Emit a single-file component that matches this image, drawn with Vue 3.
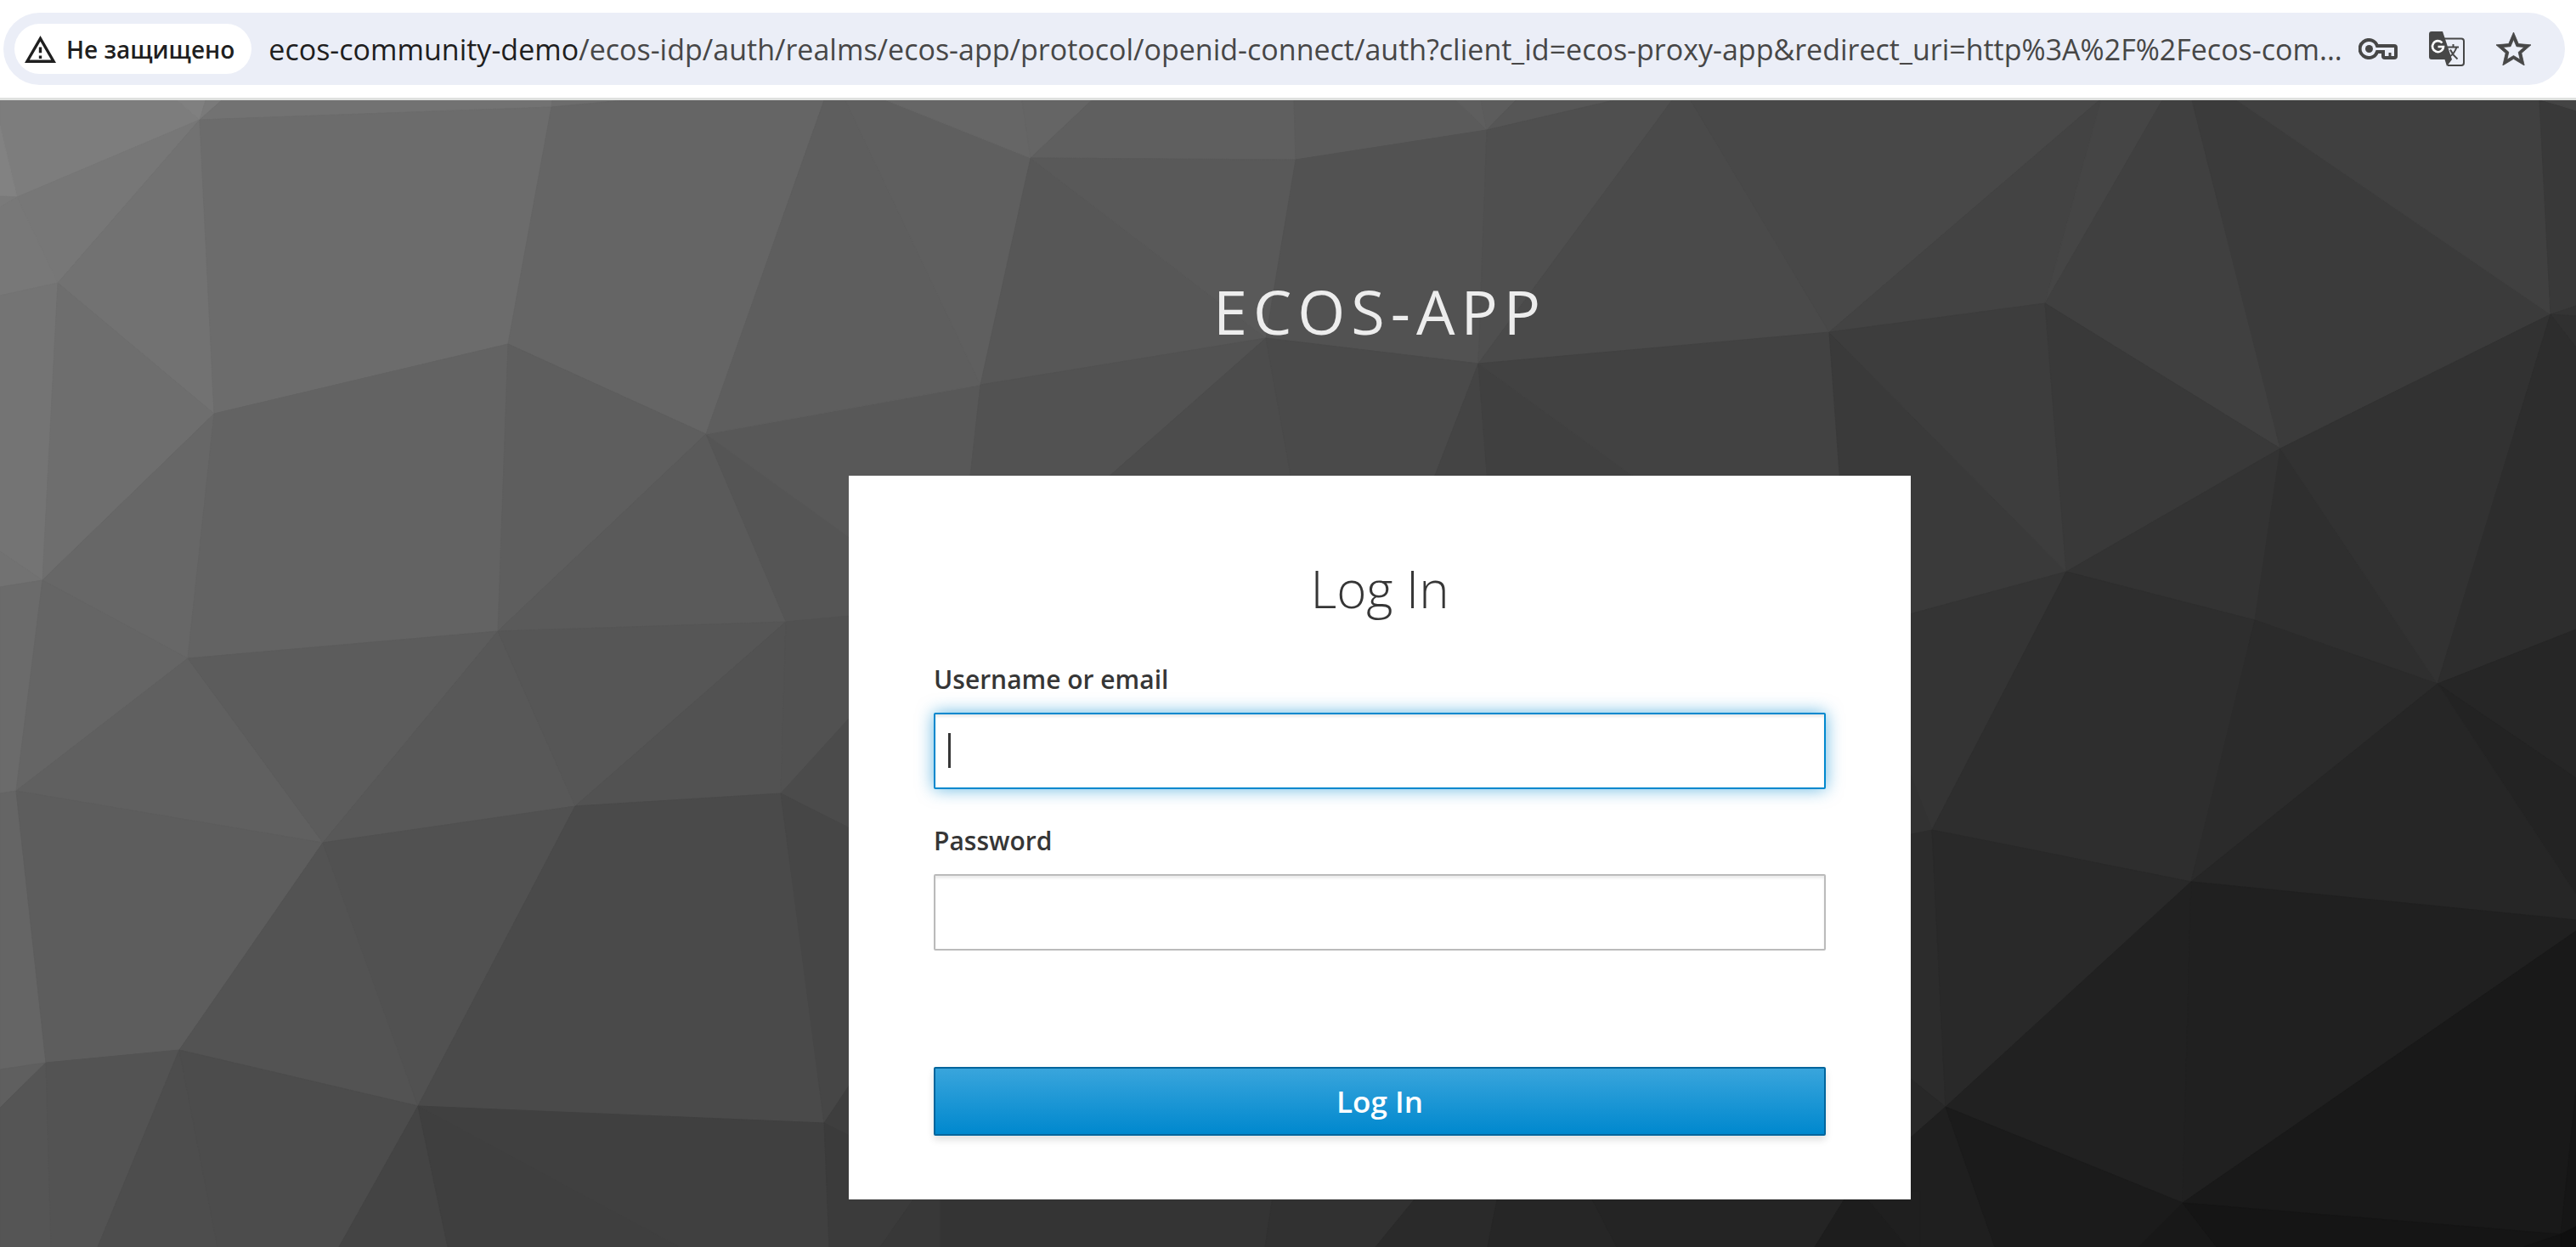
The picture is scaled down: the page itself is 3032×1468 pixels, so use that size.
<script setup>
import { ref } from 'vue'

const username = ref('')
const password = ref('')

// Facets of the low-poly backdrop: [shade, polygon points]
const facets = [
  ['#7d7d7d', '0,118 209,118 235,141 20,232 0,148'],
  ['#828282', '0,148 20,232 0,231'],
  ['#7a7a7a', '0,231 20,232 0,244'],
  ['#808080', '209,118 242,118 235,141'],
  ['#7a7a7a', '242,118 261,118 235,141'],
  ['#727272', '261,118 650,118 649,126 235,141'],
  ['#6c6c6c', '650,118 735,118 649,126'],
  ['#777777', '20,232 235,141 68,333'],
  ['#787878', '0,244 20,232 68,333 0,348'],
  ['#727272', '235,141 252,487 68,333'],
  ['#6c6c6c', '235,141 649,126 598,405 252,487'],
  ['#656565', '649,126 735,118 970,118 831,511 598,405'],
  ['#747474', '0,348 68,333 50,683 0,649'],
  ['#727272', '0,649 50,683 0,691'],
  ['#6e6e6e', '68,333 252,487 50,683'],
  ['#6b6b6b', '0,691 50,683 19,931 0,934'],
  ['#676767', '252,487 221,775 50,683'],
  ['#656565', '50,683 221,775 19,931'],
  ['#636363', '252,487 598,405 586,743 221,775'],
  ['#5e5e5e', '598,405 831,511 586,743'],
  ['#5a5a5a', '831,511 925,732 586,743'],
  ['#555555', '831,511 1010,640 1010,724 925,732'],
  ['#585858', '831,511 1154,453 1141,570 1010,640'],
  ['#5e5e5e', '970,118 995,118 1154,453 831,511'],
  ['#606060', '19,931 221,775 380,992'],
  ['#5c5c5c', '221,775 586,743 380,992'],
  ['#585858', '586,743 677,949 380,992'],
  ['#565656', '586,743 925,732 677,949'],
  ['#525252', '925,732 919,934 677,949'],
  ['#515151', '925,732 1010,724 1010,834 919,934'],
  ['#4b4b4b', '1010,834 1010,980 919,934'],
  ['#656565', '0,934 19,931 54,1251 0,1259'],
  ['#5d5d5d', '19,931 380,992 211,1236 54,1251'],
  ['#535353', '380,992 492,1302 211,1236'],
  ['#515151', '380,992 677,949 492,1302'],
  ['#4a4a4a', '677,949 919,934 970,1322 492,1302'],
  ['#464646', '919,934 1010,980 1010,1262 970,1322'],
  ['#5f5f5f', '0,1259 54,1251 0,1304'],
  ['#555555', '0,1304 54,1251 60,1468 0,1468'],
  ['#535353', '54,1251 211,1236 115,1468 60,1468'],
  ['#4d4d4d', '211,1236 256,1468 115,1468'],
  ['#4c4c4c', '211,1236 492,1302 399,1468 256,1468'],
  ['#444444', '492,1302 527,1468 399,1468'],
  ['#3f3f3f', '492,1302 800,1468 527,1468'],
  ['#404040', '492,1302 970,1322 976,1468 800,1468'],
  ['#3e3e3e', '970,1322 1010,1262 1010,1342'],
  ['#3b3b3b', '970,1322 1010,1342 1090,1342 1090,1391 1036,1468 976,1468'],

  ['#5f5f5f', '995,118 1043,118 1213,186 1154,453'],
  ['#666666', '1043,118 1203,118 1213,186'],
  ['#656565', '1203,118 1285,118 1213,186'],
  ['#5f5f5f', '1285,118 1523,118 1525,188 1213,186'],
  ['#5b5b5b', '1523,118 1714,118 1750,153 1525,188'],
  ['#5e5e5e', '1714,118 1743,118 1750,153'],
  ['#5c5c5c', '1743,118 1784,118 1750,153'],
  ['#565656', '1784,118 1900,118 1750,153'],
  ['#575757', '1213,186 1490,398 1154,453'],
  ['#595959', '1213,186 1525,188 1490,398'],
  ['#525252', '1525,188 1750,153 1740,428 1490,398'],
  ['#4f4f4f', '1750,153 1900,118 1968,118 1740,428'],
  ['#4a4a4a', '1968,118 1990,118 2153,391 1740,428'],
  ['#525252', '1154,453 1490,398 1295,570 1141,570'],
  ['#4c4c4c', '1490,398 1521,570 1295,570'],
  ['#4a4a4a', '1490,398 1740,428 1685,570 1521,570'],
  ['#444444', '1740,428 1751,570 1685,570'],
  ['#404040', '1740,428 1935,570 1751,570'],
  ['#424242', '1740,428 2153,391 2166,570 1935,570'],

  ['#484848', '1990,118 2471,118 2153,391'],
  ['#434343', '2471,118 2473,118 2407,357 2153,391'],
  ['#454545', '2473,118 2545,118 2407,357'],
  ['#404040', '2545,118 2580,118 2684,528 2407,357'],
  ['#3b3b3b', '2580,118 2633,118 3002,370 2684,528'],
  ['#404040', '2633,118 2989,118 3002,370'],
  ['#393939', '2989,118 3032,130 3032,360 3002,370'],
  ['#444444', '2994,118 3032,118 3032,130'],
  ['#343434', '3002,370 3032,360 3032,372'],
  ['#303030', '3002,370 3032,372 3032,409'],
  ['#3a3a3a', '2153,391 2432,673 2240,725 2166,570'],
  ['#3d3d3d', '2153,391 2407,357 2432,673'],
  ['#393939', '2407,357 2684,528 2432,673'],
  ['#333333', '2684,528 2654,730 2432,673'],
  ['#2f2f2f', '2684,528 2869,805 2654,730'],
  ['#323232', '2684,528 3002,370 2869,805'],
  ['#2d2d2d', '3002,370 3032,409 3032,741 2869,805'],
  ['#343434', '2240,725 2432,673 2274,977 2240,890'],
  ['#323232', '2240,890 2274,977 2240,984'],
  ['#2e2e2e', '2432,673 2654,730 2579,1038 2274,977'],
  ['#2b2b2b', '2654,730 2869,805 2579,1038'],
  ['#262626', '2869,805 3032,741 3032,916'],
  ['#232323', '2869,805 3032,916 3032,1053'],
  ['#262626', '2869,805 3032,1053 3032,1083 2579,1038'],
  ['#2c2c2c', '2240,984 2274,977 2290,1303 2240,1263'],
  ['#292929', '2274,977 2579,1038 2290,1303'],
  ['#212121', '2579,1038 2569,1416 2290,1303'],
  ['#202020', '2579,1038 3032,1083 3032,1096 2569,1416'],
  ['#191919', '2569,1416 3032,1096 3032,1285 3014,1453'],
  ['#161616', '3032,1285 3032,1444 3014,1453'],
  ['#282828', '2240,1263 2290,1303 2240,1347'],
  ['#1f1f1f', '2240,1347 2290,1303 2348,1468 2245,1468 2198,1412 2240,1400'],
  ['#1b1b1b', '2290,1303 2569,1416 2517,1468 2348,1468'],
  ['#181818', '2569,1416 2609,1468 2517,1468'],
  ['#151515', '2569,1416 3014,1453 2970,1468 2609,1468'],
  ['#121212', '3014,1453 3014,1468 2970,1468'],
  ['#0f0f0f', '3014,1453 3032,1444 3032,1468 3014,1468'],

  ['#383838', '1082,1402 1107,1402 1107,1468 1036,1468'],
  ['#343434', '1107,1402 1499,1402 1489,1468 1107,1468'],
  ['#313131', '1499,1402 1673,1402 1619,1468 1489,1468'],
  ['#2a2a2a', '1673,1402 1764,1402 1751,1468 1619,1468'],
  ['#262626', '1764,1402 1869,1402 1903,1468 1751,1468'],
  ['#242424', '1869,1402 2177,1402 2136,1468 1903,1468'],
  ['#1d1d1d', '2177,1402 2190,1402 2245,1468 2136,1468'],
  ['#1f1f1f', '2190,1402 2260,1402 2260,1468 2245,1468'],
]
</script>

<template>
  <div class="window">
    <header class="toolbar">
      <div class="omnibox">
        <button class="site-chip" type="button">
          <svg class="warning" viewBox="1 2 22 19" aria-hidden="true">
            <path d="M12 5.99L19.53 19H4.47L12 5.99M12 2L1 21h22L12 2zm1 14h-2v2h2v-2zm0-6h-2v4h2v-4z" />
          </svg>
          <span>Не защищено</span>
        </button>
        <div class="url"><span class="host">ecos-community-demo</span>/ecos-idp/auth/realms/ecos-app/protocol/openid-connect/auth?client_id=ecos-proxy-app&amp;redirect_uri=http%3A%2F%2Fecos-com...</div>
        <div class="actions">
          <button type="button" aria-label="Passwords">
            <svg width="46" height="25" viewBox="0 0 46 25" fill="none" stroke="#474747" stroke-width="4">
              <path d="M22 9H42Q44 9 44 11V21Q44 23 42 23H31Q29 23 29 21V16H22A10.5 10.5 0 1 1 22 9Z" />
              <path d="M37 17V22" stroke-width="3" />
              <circle cx="12.5" cy="12.5" r="4.5" fill="#474747" stroke="none" />
            </svg>
          </button>
          <button type="button" aria-label="Translate">
            <svg width="42" height="41" viewBox="0 0 42 41">
              <path d="M18 8.5H38Q41 8.5 41 11.5V37Q41 40 38 40H22" fill="none" stroke="#474747" stroke-width="2" />
              <path d="M3 0H16L27 33L21 41L18.5 33H3Q0 33 0 30V3Q0 0 3 0Z" fill="#474747" />
              <path d="M15.5 13.5A6.500 6.500 0 1 0 17 18H10.500" fill="none" stroke="#fff" stroke-width="2.6" />
              <path d="M22 18.5H35M28.500 15V18.500M32.500 18.500Q30 26 24 30M25 21.500Q28 28 33.500 32.500" fill="none" stroke="#474747" stroke-width="2" />
            </svg>
          </button>
          <button type="button" aria-label="Bookmark">
            <svg width="41" height="39" viewBox="2 2 20 19">
              <path d="M22 9.240l-7.190-.62L12 2 9.190 8.630 2 9.240l5.460 4.730L5.820 21 12 17.270 18.180 21l-1.630-7.030L22 9.240zM12 15.400l-3.760 2.270 1-4.280-3.320-2.880 4.380-.38L12 6.100l1.710 4.040 4.380.38-3.320 2.880 1 4.280L12 15.400z" fill="#474747" stroke="#474747" stroke-width=".4" />
            </svg>
          </button>
        </div>
      </div>
    </header>

    <main class="page">
      <svg class="backdrop" viewBox="0 118 3032 1350" preserveAspectRatio="xMidYMid slice" aria-hidden="true">
        <polygon v-for="([shade, points], i) in facets" :key="i" :points="points" :fill="shade" :stroke="shade" />
      </svg>

      <h1 class="realm">ECOS-APP</h1>

      <form class="card" @submit.prevent>
        <h2>Log In</h2>
        <div class="field">
          <label for="username">Username or email</label>
          <div class="control">
            <input id="username" v-model="username" class="focused" type="text" autocomplete="off" />
            <span class="caret" aria-hidden="true"></span>
          </div>
        </div>
        <div class="field">
          <label for="password">Password</label>
          <input id="password" v-model="password" type="password" autocomplete="off" />
        </div>
        <button class="submit" type="submit">Log In</button>
      </form>
    </main>
  </div>
</template>

<style>
body {
  margin: 0;
}
</style>

<style scoped>
.window {
  display: flex;
  flex-direction: column;
  min-height: 100vh;
  font-family: "Open Sans", "Noto Sans", sans-serif;
  background: #fff;
}

.window * {
  box-sizing: border-box;
}

.toolbar {
  padding: 15px 13px 15px 4px;
  border-bottom: 3px solid #dfe1df;
}

.omnibox {
  display: flex;
  align-items: center;
  height: 85px;
  padding: 0 40px 0 13px;
  border-radius: 43px;
  background: #ebeef7;
}

.site-chip {
  display: flex;
  flex: none;
  align-items: center;
  gap: 12px;
  height: 59px;
  padding: 0 20px 0 12px;
  border: 0;
  border-radius: 30px;
  background: #fff;
  color: #1f1f1f;
  font: 600 28px/40px "Open Sans", "Noto Sans", sans-serif;
  white-space: nowrap;
}

.warning {
  width: 37px;
  height: 32px;
  fill: #1f1f1f;
}

.url {
  flex: 1;
  min-width: 0;
  margin-left: 20px;
  overflow: hidden;
  color: #474747;
  font-size: 34px;
  line-height: 48px;
  white-space: nowrap;
}

.host {
  color: #1f1f1f;
}

.actions {
  display: flex;
  align-items: center;
  gap: 37px;
}

.actions button {
  display: flex;
  padding: 0;
  border: 0;
  background: none;
}

.page {
  position: relative;
  display: flex;
  flex: 1;
  flex-direction: column;
  align-items: center;
  padding: 208px 0 56px 216px;
  background: #484848;
}

.backdrop {
  position: absolute;
  inset: 0;
  width: 100%;
  height: 100%;
}

.realm {
  position: relative;
  margin: 0 0 154px;
  color: #ededed;
  font-size: 72px;
  font-weight: 400;
  line-height: 80px;
  letter-spacing: 7px;
}

.card {
  position: relative;
  width: 100%;
  max-width: 1250px;
  padding: 93px 100px 75px;
  background: #fff;
  color: #363636;
}

h2 {
  margin: 0 0 47px;
  font-size: 60px;
  font-weight: 300;
  line-height: 80px;
  text-align: center;
}

.field {
  display: flex;
  flex-direction: column;
  gap: 19px;
  margin-bottom: 41px;
}

label {
  font-size: 30px;
  font-weight: 600;
  line-height: 40px;
}

.control {
  position: relative;
  display: flex;
}

input {
  width: 100%;
  height: 90px;
  padding: 0 16px;
  border: 2px solid #bbb;
  border-radius: 2px;
  background: #fff;
  box-shadow: inset 0 3px 3px rgba(3, 3, 3, 0.08);
  color: #363636;
  font: 400 35px/48px "Open Sans", "Noto Sans", sans-serif;
  outline: 0;
}

input.focused {
  border-color: #0088ce;
  box-shadow: inset 0 3px 3px rgba(3, 3, 3, 0.08), 0 0 20px rgba(0, 136, 206, 0.6);
}

.caret {
  position: absolute;
  top: 24px;
  left: 17px;
  width: 3px;
  height: 41px;
  background: #363636;
}

.submit {
  display: block;
  width: 100%;
  height: 81px;
  margin-top: 137px;
  padding: 0;
  border: 2px solid #00659c;
  border-radius: 2px;
  background: linear-gradient(#39a5dc, #0088ce);
  box-shadow: 0 5px 8px rgba(3, 3, 3, 0.12);
  color: #fff;
  font: 600 35px/48px "Open Sans", "Noto Sans", sans-serif;
}
</style>
